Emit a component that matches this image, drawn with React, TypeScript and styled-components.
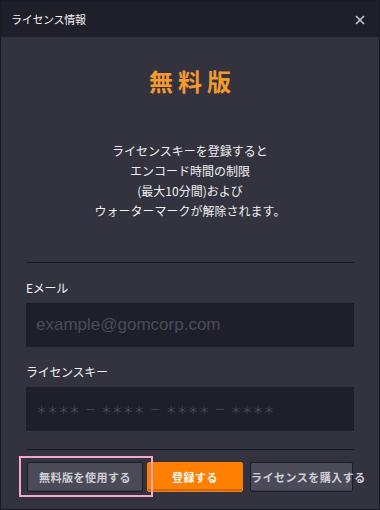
import styled, { createGlobalStyle } from "styled-components";

const GlobalStyle = createGlobalStyle`
  html, body {
    margin: 0;
    padding: 0;
    background: #1e1e26;
  }
  body {
    font-family: "Noto Sans CJK JP", "Noto Sans", sans-serif;
  }
`;

export default function App() {
  return (
    <>
      <GlobalStyle />
      <Window>
        <TitleBar>
          <Title>ライセンス情報</Title>
          <CloseButton aria-label="close">
            <svg width="10" height="10" viewBox="0 0 10 10">
              <path d="M1 1L9 9M9 1L1 9" stroke="#c8c8cf" strokeWidth="1.6" />
            </svg>
          </CloseButton>
        </TitleBar>
        <Body>
          <Heading>無料版</Heading>
          <Message>
            ライセンスキーを登録すると
            <br />
            エンコード時間の制限
            <br />
            (最大10分間)および
            <br />
            ウォーターマークが解除されます。
          </Message>
          <Divider $gap={41} />
          <Label>Eメール</Label>
          <Input placeholder="example@gomcorp.com" $latin />
          <Label>ライセンスキー</Label>
          <Input placeholder="＊＊＊＊  －  ＊＊＊＊  －  ＊＊＊＊  －  ＊＊＊＊" />
          <Divider $gap={18} />
          <Buttons>
            <Highlight>
              <Button $width={116}>無料版を使用する</Button>
            </Highlight>
            <Button $width={96} $primary>
              登録する
            </Button>
            <Button $width={103}>ライセンスを購入する</Button>
          </Buttons>
        </Body>
      </Window>
    </>
  );
}

const Window = styled.div`
  width: 380px;
  height: 510px;
  box-sizing: border-box;
  border: 1px solid #1b1b22;
  display: flex;
  flex-direction: column;
  background: #33323f;
`;

const TitleBar = styled.div`
  height: 36px;
  flex: none;
  display: flex;
  align-items: center;
  justify-content: space-between;
  padding: 0 14px 0 10px;
  background: #1f1f29;
`;

const Title = styled.span`
  color: #f2f2f2;
  font-size: 11px;
  letter-spacing: -0.3px;
`;

const CloseButton = styled.span`
  display: flex;
  align-items: center;
  padding-top: 2px;
`;

const Body = styled.div`
  flex: 1;
  display: flex;
  flex-direction: column;
  padding: 0 25px;
`;

const Heading = styled.h1`
  margin: 28px 0 0;
  text-align: center;
  color: #f39a2e;
  font-size: 24px;
  font-weight: 700;
  line-height: 32px;
  letter-spacing: 5px;
  padding-left: 5px;
`;

const Message = styled.p`
  margin: 44px 0 0;
  text-align: center;
  color: #f0f0f0;
  font-size: 12px;
  line-height: 20px;
`;

const Divider = styled.div<{ $gap: number }>`
  height: 1px;
  background: #1c1c24;
  margin-top: ${({ $gap }) => $gap}px;
`;

const Label = styled.div`
  color: #f2f2f2;
  font-size: 12px;
  letter-spacing: -0.3px;
  line-height: 18px;
  margin: 16px 0 6px;
`;

const Input = styled.input<{ $latin?: boolean }>`
  height: 44px;
  box-sizing: border-box;
  border: none;
  outline: none;
  background: #1f1f29;
  padding: 0 10px;
  color: #dddde2;
  font-family: ${({ $latin }) =>
    $latin ? `"Liberation Sans", Arial, sans-serif` : `"Noto Sans CJK JP", sans-serif`};
  font-size: ${({ $latin }) => ($latin ? "17px" : "11px")};
  white-space: pre;
  &::placeholder {
    color: #4c4b57;
  }
`;

const Buttons = styled.div`
  display: flex;
  align-items: center;
  gap: 4px;
  margin-top: 12px;
  margin-left: 1px;
  & > :last-child {
    margin-left: 3px;
  }
`;

const Highlight = styled.div`
  position: relative;
  display: flex;
  &::after {
    content: "";
    position: absolute;
    left: -8px;
    right: -10px;
    top: -6px;
    bottom: -5px;
    border: 2px solid #f7a6c7;
    pointer-events: none;
  }
`;

const Button = styled.button<{ $width: number; $primary?: boolean }>`
  width: ${({ $width }) => $width}px;
  height: 30px;
  padding: 0;
  border: 1px solid ${({ $primary }) => ($primary ? "#ff8000" : "#1c1c24")};
  border-radius: 2px;
  background: ${({ $primary }) => ($primary ? "#ff8000" : "#4b4a58")};
  box-shadow: ${({ $primary }) =>
    $primary ? "inset 0 -2px 0 #c96a10" : "inset 0 -1px 0 #3a3946"};
  color: ${({ $primary }) => ($primary ? "#ffffff" : "#cfcfd6")};
  font-family: "Noto Sans CJK JP", sans-serif;
  font-size: 11px;
  font-weight: 700;
  white-space: nowrap;
  letter-spacing: 0.5px;
`;
